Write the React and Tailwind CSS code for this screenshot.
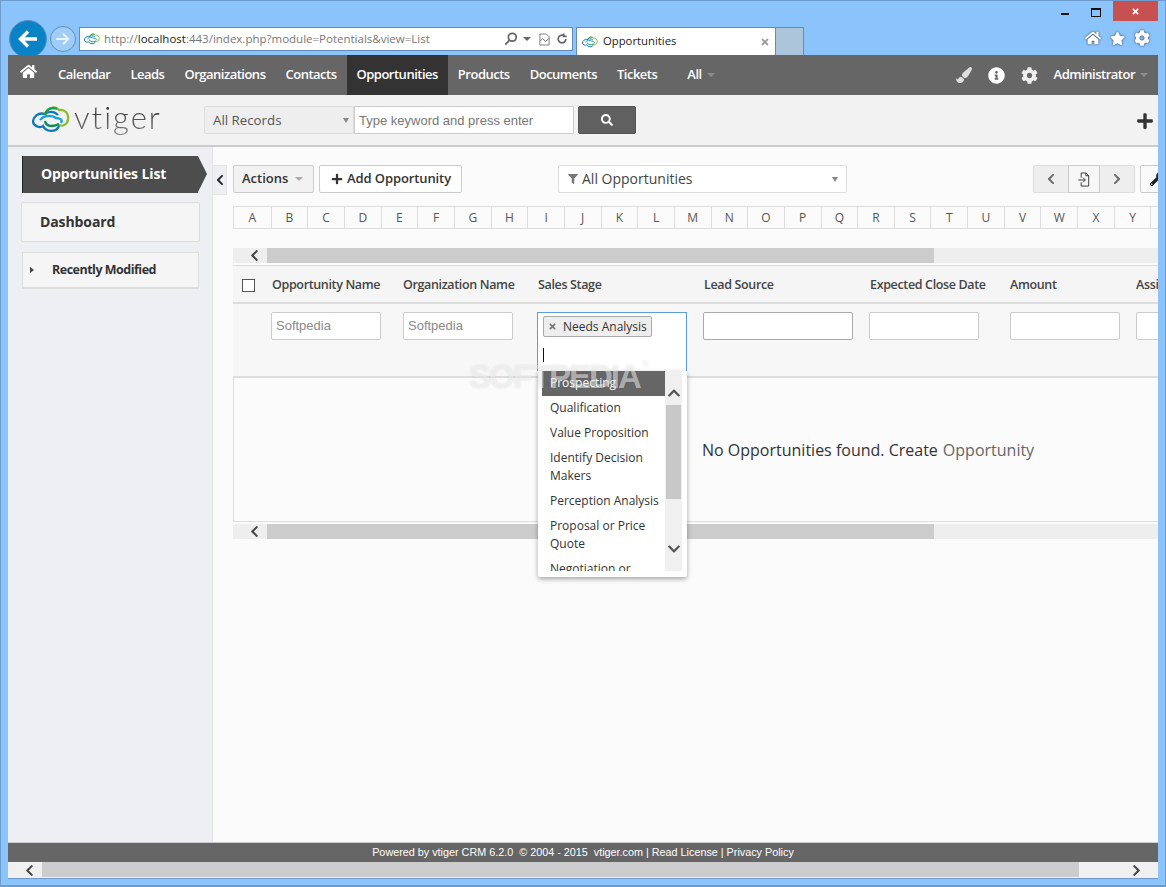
import {
  FaHome,
  FaChevronLeft,
  FaChevronRight,
  FaChevronUp,
  FaChevronDown,
  FaPlus,
  FaSearch,
  FaInfoCircle,
  FaCog,
  FaPaintBrush,
  FaWrench,
  FaFilter,
  FaTimes,
  FaStar,
} from 'react-icons/fa'

const navItems = ['Calendar', 'Leads', 'Organizations', 'Contacts', 'Opportunities', 'Products', 'Documents', 'Tickets']
const letters = 'ABCDEFGHIJKLMNOPQRSTUVWXY'.split('')
const options = [
  'Prospecting',
  'Qualification',
  'Value Proposition',
  'Identify Decision Makers',
  'Perception Analysis',
  'Proposal or Price Quote',
  'Negotiation or Review',
]

const CloudLogo = ({ className }) => (
  <svg viewBox="0 0 38 29" className={className} fill="none" strokeWidth="2.3">
    <path d="M13 10C14 3 23 0 27 5C33 4 37 9 36 14C36 19 31 22 26 20" stroke="#8dbb2b" />
    <path d="M26 10C21 5 15 7 13 9C6 7 1 12 1 17C2 22 9 23 11 21C14 27 24 28 27 21" stroke="#0f78c0" />
    <path d="M8 15C12 10 20 10 24 13C28 13 31 15 29 18" stroke="#17a3dc" />
    <path d="M13 16C14 22 22 22 27 19" stroke="#0a8a4c" />
    <path d="M13 10C15 3 21 2 25 4" stroke="#1c9a55" />
  </svg>
)

const Scrollbar = ({ className = '' }) => (
  <div className={`flex h-[15px] bg-[#eeeeee] ${className}`}>
    <div className="w-[34px] flex items-center justify-end pr-[6px] text-[#444]">
      <FaChevronLeft className="text-[13px]" />
    </div>
    <div className="w-[667px] bg-[#cccccc]" />
  </div>
)

const TextFilter = ({ width, value, strong }) => (
  <div
    className={`h-[28px] bg-white border rounded-[2px] px-[4px] flex items-center text-[13px] text-[#8a8a8a] font-['Liberation_Sans',sans-serif] ${width} ${
      strong ? 'border-[#aaaaaa]' : 'border-[#cccccc]'
    }`}
  >
    {value}
  </div>
)

const BrowserChrome = () => (
  <div className="h-[54px] shrink-0">
    <div className="flex justify-end items-start h-[21px]">
      <div className="w-[8px] h-[2px] bg-[#111] mt-[12px] mr-[22px]" />
      <div className="w-[10px] h-[9px] border border-[#111] border-t-2 mt-[7px] mr-[8px]" />
      <div className="w-[45px] h-[20px] bg-[#c75050] flex items-center justify-center text-white ml-[4px]">
        <FaTimes className="text-[9px]" />
      </div>
    </div>
    <div className="flex items-start pl-[1px]">
      <div className="w-[38px] h-[38px] rounded-full bg-[#0a83c6] border border-[#5a8fbe] flex items-center justify-center -mt-[2px] shrink-0">
        <svg viewBox="0 0 24 24" className="w-[24px] h-[24px]" fill="none" stroke="white" strokeWidth="3.4">
          <path d="M21 12H5M12 4.5 4.5 12l7.5 7.5" />
        </svg>
      </div>
      <div className="w-[26px] h-[26px] rounded-full border border-[#5f8fbb] bg-[#9fcdf6] flex items-center justify-center ml-[3px] mt-[4px] shrink-0">
        <svg viewBox="0 0 24 24" className="w-[18px] h-[18px]" fill="none" stroke="#e8f3fc" strokeWidth="2.6">
          <path d="M3 12h16M12 5l7 7-7 7" />
        </svg>
      </div>
      <div className="w-[494px] h-[24px] mt-[5px] ml-[3px] bg-white border border-[#5e8dbb] flex items-center pl-[4px] shrink-0 font-['Open_Sans',sans-serif] text-[11.5px] text-[#777]">
        <CloudLogo className="w-[16px] h-[14px] mr-[4px]" />
        <span>http://</span>
        <span className="text-[#222]">localhost</span>
        <span>:443/index.php?module=Potentials&amp;view=List</span>
        <div className="flex items-center ml-auto mr-[4px] text-[#666]">
          <svg viewBox="0 0 16 16" className="w-[14px] h-[14px]" fill="none" stroke="#666" strokeWidth="2">
            <circle cx="9.5" cy="6" r="4.5" />
            <path d="M6 9.5 1.5 14.5" />
          </svg>
          <div className="w-0 h-0 border-x-[4px] border-x-transparent border-t-[4px] border-t-[#666] ml-[5px] mr-[8px]" />
          <svg viewBox="0 0 12 14" className="w-[11px] h-[13px] mr-[6px]" fill="none" stroke="#777" strokeWidth="1">
            <path d="M1 1h7l3 3v9H1zM1 9l3-3 3 3 4-3" />
          </svg>
          <svg viewBox="0 0 14 14" className="w-[12px] h-[12px]" fill="none" stroke="#666" strokeWidth="2">
            <path d="M11.5 7a4.5 4.5 0 1 1-2-3.8M9 .5v3.5h3.5" />
          </svg>
        </div>
      </div>
      <div className="w-[200px] h-[28px] mt-[5px] ml-[3px] bg-white border border-[#5e8dbb] border-b-0 flex items-center pl-[5px] pr-[4px] text-[11.3px] text-[#222] font-['Open_Sans',sans-serif] shrink-0">
        <CloudLogo className="w-[16px] h-[14px] mr-[5px]" />
        <span>Opportunities</span>
        <FaTimes className="ml-auto mr-[1px] text-[10px] text-[#999]" />
      </div>
      <div className="w-[28px] h-[28px] mt-[5px] bg-[#adc5da] border border-l-0 border-[#5e8dbb] border-b-0 shrink-0" />
      <div className="flex items-center ml-auto pr-[8px] mt-[8px] text-white gap-[9px]">
        <FaHome className="text-[16px] drop-shadow-[0_0_1px_#335]" />
        <FaStar className="text-[15px] drop-shadow-[0_0_1px_#335]" />
        <FaCog className="text-[16px] drop-shadow-[0_0_1px_#335]" />
      </div>
    </div>
  </div>
)

const TopNav = () => (
  <div className="h-[40px] bg-[#666666] flex items-stretch text-white text-[13px] font-semibold tracking-[-0.5px] font-['Open_Sans',sans-serif] shrink-0">
    <div className="w-[40px] flex items-start justify-center pt-[8px] shrink-0">
      <FaHome className="text-[17px]" />
    </div>
    <div className="flex items-stretch">
      {navItems.map(item => (
        <div key={item} className={`px-[10px] flex items-center ${item === 'Opportunities' ? 'bg-[#333333]' : ''}`}>
          {item}
        </div>
      ))}
      <div className="flex items-center ml-[20px]">
        All
        <span className="ml-[5px] w-0 h-0 border-x-[4px] border-x-transparent border-t-[4px] border-t-[#8c8c8c]" />
      </div>
    </div>
    <div className="ml-auto flex items-center pr-[10px]">
      <FaPaintBrush className="text-[16px] text-[#ddd] mr-[16px]" />
      <FaInfoCircle className="text-[17px] mr-[16px]" />
      <FaCog className="text-[17px] text-[#eee] mr-[16px]" />
      <span>Administrator</span>
      <span className="ml-[5px] w-0 h-0 border-x-[4px] border-x-transparent border-t-[4px] border-t-[#8c8c8c]" />
    </div>
  </div>
)

const SearchBar = () => (
  <div className="h-[52px] bg-[#f2f2f2] border-b-2 border-[#cccccc] flex items-start shrink-0">
    <div className="w-[196px] h-[48px] flex items-center pl-[24px] shrink-0">
      <CloudLogo className="w-[38px] h-[29px]" />
      <span className="ml-[4px] text-[31px] leading-none pb-[4px] font-light tracking-[2px] bg-gradient-to-b from-[#222222] to-[#888888] bg-clip-text text-transparent font-['Lato',sans-serif]">
        vtiger
      </span>
    </div>
    <div className="flex mt-[11px]">
      <div className="w-[150px] h-[28px] bg-[#eeeeee] border border-[#dddddd] rounded-l-[2px] flex items-center justify-between pl-[8px] pr-[4px] pt-[1px] text-[13.3px] text-[#555] font-['Open_Sans',sans-serif]">
        All Records
        <span className="w-0 h-0 border-x-[3px] border-x-transparent border-t-[5px] border-t-[#888]" />
      </div>
      <div className="w-[220px] h-[28px] bg-white border border-[#cccccc] flex items-center pl-[4px] pt-[1px] text-[13px] text-[#777] font-['Liberation_Sans',sans-serif]">
        Type keyword and press enter
      </div>
      <div className="w-[58px] h-[28px] ml-[4px] bg-[#606060] border border-[#555] rounded-[2px] flex items-center justify-center text-white">
        <FaSearch className="text-[12px]" />
      </div>
    </div>
    <div className="ml-auto mt-[17px] pr-[4px] text-[#333]">
      <FaPlus className="text-[18px]" />
    </div>
  </div>
)

const Sidebar = () => (
  <div className="w-[205px] shrink-0 bg-[#edeff3] border-r border-[#e4e4e4] font-['Open_Sans',sans-serif] pt-[9px]">
    <div className="relative ml-[14px] w-[176px] h-[37px] bg-[#4d4d4d] border-l border-[#222] flex items-center pl-[18px] pb-[2px] text-white text-[14px] font-bold tracking-[-0.1px]">
      Opportunities List
      <div className="absolute left-full top-0 w-0 h-0 border-y-[18.5px] border-y-transparent border-l-[9px] border-l-[#4d4d4d]" />
    </div>
    <div className="ml-[13px] mt-[9px] w-[179px] h-[40px] bg-[#f5f5f5] border border-[#dddddd] rounded-[2px] flex items-center pl-[18px] pb-[2px] text-[14px] font-bold tracking-[-0.1px] text-[#333]">
      Dashboard
    </div>
    <div className="ml-[14px] mt-[10px] w-[177px] h-[37px] bg-[#f5f5f5] border border-[#dddddd] border-b-2 flex items-center pl-[7px] text-[12.5px] font-bold tracking-[-0.5px] text-[#333]">
      <span className="w-0 h-0 border-y-[3px] border-y-transparent border-l-[4px] border-l-[#444] mr-[18px]" />
      Recently Modified
    </div>
  </div>
)

const Toolbar = () => (
  <div className="flex items-start h-[28px] font-['Open_Sans',sans-serif] text-[13px] font-semibold text-[#333]">
    <div className="w-[81px] h-[28px] shrink-0 bg-[#f2f2f2] border border-[#cccccc] rounded-[2px] flex items-center pl-[8px]">
      Actions
      <span className="ml-[7px] w-0 h-0 border-x-[4px] border-x-transparent border-t-[4px] border-t-[#aaa]" />
    </div>
    <div className="w-[143px] h-[28px] shrink-0 ml-[5px] bg-white border border-[#cccccc] rounded-[2px] flex items-center pl-[11px] tracking-[-0.1px]">
      <FaPlus className="text-[12px] mr-[4px]" />
      Add Opportunity
    </div>
    <div className="w-[289px] h-[28px] shrink-0 ml-[96px] bg-white border border-[#dddddd] rounded-[2px] flex items-center pl-[9px] pr-[8px] pb-[2px] text-[14px] font-normal text-[#444]">
      <FaFilter className="text-[10px] text-[#777] mr-[4px] mt-[2px]" />
      All Opportunities
      <span className="ml-auto mt-[2px] w-0 h-0 border-x-[3px] border-x-transparent border-t-[5px] border-t-[#888]" />
    </div>
    <div className="flex h-[28px] shrink-0 ml-[186px] bg-[#eeeeee] border border-[#dddddd] rounded-[2px] text-[#666]">
      <div className="w-[34px] flex items-center justify-center">
        <FaChevronLeft className="text-[12px]" />
      </div>
      <div className="w-[32px] -my-px bg-[#f7f7f7] border border-[#cccccc] flex items-center justify-center text-[#333]">
        <svg viewBox="0 0 14 16" className="w-[14px] h-[15px]" fill="none" stroke="#333" strokeWidth="1">
          <path d="M4 6V1h5l3 3v11H4v-4M9 1v3h3M1 8.5h7M6 6l2.5 2.5L6 11" />
        </svg>
      </div>
      <div className="w-[34px] flex items-center justify-center">
        <FaChevronRight className="text-[12px]" />
      </div>
    </div>
    <div className="w-[40px] h-[28px] shrink-0 ml-[5px] bg-[#fafafa] border border-[#cccccc] rounded-[2px] flex items-center pl-[9px] text-[#222]">
      <FaWrench className="text-[14px]" />
    </div>
  </div>
)

const Dropdown = () => (
  <div className="absolute left-[305px] top-[123px] w-[149px] h-[206px] bg-white shadow-[0_2px_5px_rgba(0,0,0,0.35)] rounded-b-[2px] px-[4px] font-['Open_Sans',sans-serif] text-[12px] leading-[18px] text-[#333]">
    <div className="flex h-[200px]">
      <div className="w-[123px] h-[200px] overflow-hidden">
        {options.map(option => (
          <div
            key={option}
            className={`pl-[8px] pr-[3px] pt-[2.5px] pb-[4.5px] ${option === 'Prospecting' ? 'bg-[#666666] text-white' : ''}`}
          >
            {option}
          </div>
        ))}
      </div>
      <div className="w-[17px] h-[200px] bg-[#f0f0f0] flex flex-col items-center">
        <div className="h-[34px] flex items-center justify-center text-[#555] pt-[10px]">
          <FaChevronUp className="text-[14px]" />
        </div>
        <div className="w-[15px] h-[94px] bg-[#c8c8c8]" />
        <div className="flex-1 flex items-center justify-center text-[#555] pt-[28px]">
          <FaChevronDown className="text-[14px]" />
        </div>
      </div>
    </div>
  </div>
)

const ListTable = () => (
  <div className="relative font-['Open_Sans',sans-serif]">
    <Scrollbar />
    <div className="mt-[2px] h-[39px] pt-[2px] bg-[#f5f5f5] border-t border-b-2 border-[#dddddd] flex items-center text-[12.5px] font-semibold tracking-[-0.35px] text-[#444] whitespace-nowrap">
      <div className="w-[39px] pl-[9px] shrink-0">
        <div className="w-[13px] h-[13px] bg-white border border-[#555]" />
      </div>
      <div className="w-[131px] shrink-0">Opportunity Name</div>
      <div className="w-[135px] shrink-0">Organization Name</div>
      <div className="w-[166px] shrink-0">Sales Stage</div>
      <div className="w-[166px] shrink-0">Lead Source</div>
      <div className="w-[140px] shrink-0">Expected Close Date</div>
      <div className="w-[126px] shrink-0">Amount</div>
      <div className="w-[22px] shrink-0 overflow-hidden">Assigned</div>
    </div>
    <div className="h-[74px] bg-[#f7f7f7] border-b-2 border-[#dddddd] flex items-start pt-[8px]">
      <div className="w-[38px] shrink-0" />
      <div className="w-[132px] shrink-0">
        <TextFilter width="w-[110px]" value="Softpedia" />
      </div>
      <div className="w-[134px] shrink-0">
        <TextFilter width="w-[110px]" value="Softpedia" />
      </div>
      <div className="w-[166px] h-[59px] shrink-0">
        <div className="w-[150px] h-[59px] bg-white border border-[#5b9dd9] border-b-0 pl-[5px] pt-[3px]">
          <div className="w-[109px] h-[21px] bg-[#eeeeee] border border-[#aaaaaa] rounded-[2px] flex items-center pl-[4px] text-[12px] text-[#333]">
            <FaTimes className="text-[9px] text-[#777] mr-[6px]" />
            Needs Analysis
          </div>
          <div className="w-px h-[14px] bg-[#111] mt-[11px]" />
        </div>
      </div>
      <div className="w-[166px] shrink-0">
        <TextFilter width="w-[150px]" value="" strong />
      </div>
      <div className="w-[141px] shrink-0">
        <TextFilter width="w-[110px]" value="" />
      </div>
      <div className="w-[126px] shrink-0">
        <TextFilter width="w-[110px]" value="" />
      </div>
      <TextFilter width="w-[40px] shrink-0" value="" />
    </div>
    <div className="h-[144px] pt-[1px] bg-[#fbfbfb] border-l border-b border-[#dddddd] flex items-center pl-[468px] text-[16px] text-[#333]">
      No Opportunities found. Create
      <span className="ml-[5px] text-[#666]">Opportunity</span>
    </div>
    <Scrollbar className="mt-[2px]" />
    <Dropdown />
    <div className="absolute left-[236px] top-[110px] text-[33px] leading-[38px] font-bold tracking-[-2px] text-white/50 [text-shadow:0_0_2px_rgba(0,0,0,0.12)] pointer-events-none whitespace-nowrap font-['Liberation_Sans',sans-serif]">
      SOFTPEDIA
      <span className="align-top text-[9px] leading-[12px] tracking-normal font-normal ml-[2px]">®</span>
    </div>
  </div>
)

const App = () => (
  <div className="w-[1166px] h-[887px] bg-[#8ac4fa] border border-[#6d9ccc] border-b-[2px] overflow-hidden flex flex-col px-[7px]">
    <BrowserChrome />
    <div className="flex-1 min-h-0 flex flex-col bg-white border-b border-[#6d9ccc] overflow-hidden mb-[6px]">
      <TopNav />
      <SearchBar />
      <div className="flex-1 min-h-0 flex overflow-hidden bg-[#fbfbfb]">
        <Sidebar />
        <div className="flex-1 min-w-0 relative overflow-hidden pt-[18px] pl-[20px]">
          <div className="absolute left-0 top-[18px] w-[14px] h-[30px] bg-[#edeff3] border-y border-r border-[#e4e4e4] flex items-center justify-center text-[#222]">
            <FaChevronLeft className="text-[12px]" />
          </div>
          <Toolbar />
          <div className="flex mt-[13px] h-[23px] w-[960px] border-y border-[#dddddd] border-l font-['Open_Sans',sans-serif] text-[12px] text-[#555]">
            {letters.map((letter, i) => (
              <div
                key={letter}
                className={`shrink-0 border-r border-[#dddddd] flex items-center justify-center ${i === 0 ? 'w-[37.67px]' : 'w-[36.67px]'}`}
              >
                {letter}
              </div>
            ))}
          </div>
          <div className="mt-[19px] w-[925px]">
            <ListTable />
          </div>
        </div>
      </div>
      <div className="h-[20px] bg-[#666666] border-t border-[#cccccc] shrink-0 flex items-center justify-center text-white text-[10.8px] font-['Liberation_Sans',sans-serif] whitespace-pre">
        Powered by vtiger CRM 6.2.0  © 2004 - 2015  vtiger.com | Read License | Privacy Policy
      </div>
      <div className="h-[16px] bg-[#f0f0f0] shrink-0 flex">
        <div className="w-[34px] flex items-center justify-end pr-[6px] text-[#444]">
          <FaChevronLeft className="text-[13px]" />
        </div>
        <div className="w-[1037px] bg-[#cccccc] mb-px" />
        <div className="ml-auto w-[44px] flex items-center justify-center text-[#444]">
          <FaChevronRight className="text-[13px]" />
        </div>
      </div>
    </div>
  </div>
)

export default App
